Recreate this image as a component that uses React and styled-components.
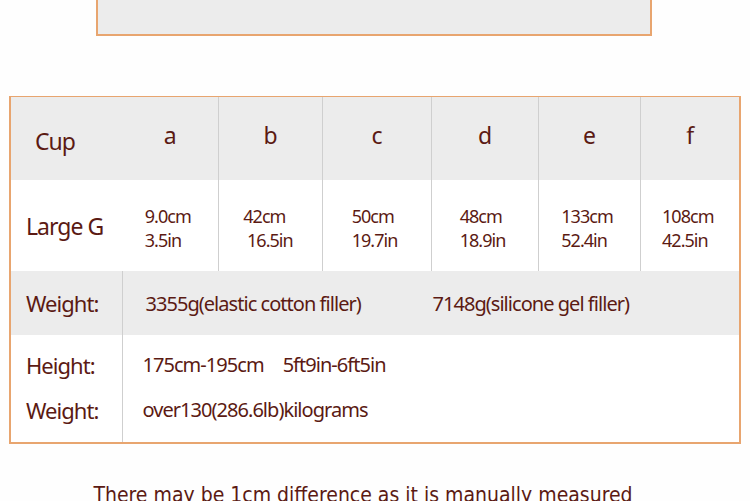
import React from "react";
import styled, { createGlobalStyle } from "styled-components";

const GlobalStyle = createGlobalStyle`
  body {
    margin: 0;
    background: #fefefe;
    font-family: "Noto Sans", "Open Sans", sans-serif;
    overflow: hidden;
  }
`;

const Page = styled.div`
  width: 750px;
  height: 501px;
  overflow: hidden;
`;

const TopBox = styled.div`
  margin-left: 96px;
  width: 552px;
  height: 34px;
  background: #ececec;
  border: 2px solid #e8a56f;
  border-top: none;
`;

const TableWrap = styled.div`
  margin: 60px 0 0 9px;
  width: 728px;
  border: 2px solid #e8a56f;
  border-top-width: 1px;
`;

const Table = styled.table`
  width: 728px;
  table-layout: fixed;
  border-collapse: collapse;
  color: #5b1a13;
  letter-spacing: -0.06em;
`;

const Row = styled.tr`
  height: ${(p) => p.h}px;
  background: ${(p) => (p.gray ? "#ececec" : "#ffffff")};
  & + & > td {
    border-top: 1px solid #cfcfcf;
  }
`;

const Cell = styled.td`
  padding: 0;
  vertical-align: middle;
  text-align: center;
  & + & {
    border-left: 1px solid #cfcfcf;
  }
`;

const Label = styled.td`
  padding: ${(p) => p.pt || 0}px 0 0 ${(p) => p.pl || 15}px;
  font-size: ${(p) => p.size || 23}px;
  text-align: left;
  vertical-align: middle;
`;

const Letter = styled.span`
  font-size: 23px;
  position: relative;
  top: -4px;
`;

const Measure = styled.div`
  display: inline-block;
  text-align: left;
  font-size: 18px;
  line-height: 24px;
  margin: 4px 4px 0 0;
`;

const WeightCell = styled.td`
  padding: 0 0 0 23px;
  border-left: 1px solid #cfcfcf;
  font-size: 20px;
  text-align: left;
`;

const Filler = styled.span`
  display: inline-block;
  width: ${(p) => p.w || "auto"};
`;

const InfoCell = styled.td`
  padding: 0 0 0 20px;
  border-left: 1px solid #cfcfcf;
  font-size: 20px;
  text-align: left;
`;

const LabelStack = styled.div`
  display: flex;
  flex-direction: column;
  gap: ${(p) => p.gap}px;
  line-height: 24px;
  margin-top: -2px;
`;

const Gap = styled.span`
  display: inline-block;
  width: 19px;
`;

const Note = styled.p`
  margin: 39px 0 0;
  text-align: center;
  color: #5b1a13;
  font-family: "DejaVu Sans Condensed", "Liberation Sans Narrow", sans-serif;
  font-size: 21px;
  line-height: 24px;
  letter-spacing: 0;
  padding-right: 24px;
`;

const widths = [111, 96, 104, 109, 107, 102, 99];

const cups = [
  ["a", "9.0cm", "3.5in"],
  ["b", "42cm", "\u00a016.5in"],
  ["c", "50cm", "19.7in"],
  ["d", "48cm", "18.9in"],
  ["e", "133cm", "52.4in"],
  ["f", "108cm", "42.5in"],
];

export default function App() {
  return (
    <Page>
      <GlobalStyle />
      <TopBox />
      <TableWrap>
        <Table>
          <colgroup>
            {widths.map((w, i) => (
              <col key={i} style={{ width: w }} />
            ))}
          </colgroup>
          <tbody>
            <Row gray h={83}>
              <Label pl={24} pt={4}>Cup</Label>
              {cups.map((c) => (
                <Cell key={c[0]}>
                  <Letter>{c[0]}</Letter>
                </Cell>
              ))}
            </Row>
            <Row h={91}>
              <Label>Large G</Label>
              {cups.map((c) => (
                <Cell key={c[0]}>
                  <Measure>
                    {c[1]}
                    <br />
                    {c[2]}
                  </Measure>
                </Cell>
              ))}
            </Row>
            <Row gray h={64}>
              <Label size={22}>Weight:</Label>
              <WeightCell colSpan={6}>
                <Filler w="287px">3355g(elastic cotton filler)</Filler>
                <Filler>7148g(silicone gel filler)</Filler>
              </WeightCell>
            </Row>
            <Row h={107}>
              <Label size={22}>
                <LabelStack gap={21}>
                  <span>Height:</span>
                  <span>Weight:</span>
                </LabelStack>
              </Label>
              <InfoCell colSpan={6}>
                <LabelStack gap={21}>
                  <span>
                    175cm-195cm<Gap />5ft9in-6ft5in
                  </span>
                  <span>over130(286.6lb)kilograms</span>
                </LabelStack>
              </InfoCell>
            </Row>
          </tbody>
        </Table>
      </TableWrap>
      <Note>There may be 1cm difference as it is manually measured</Note>
    </Page>
  );
}
